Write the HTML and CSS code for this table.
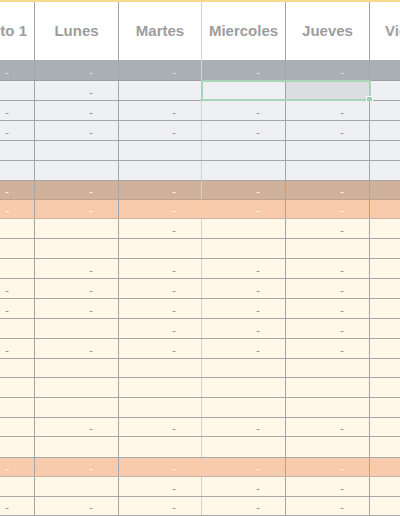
FILE: index.html
```html
<!DOCTYPE html>
<html lang="es">
<head>
<meta charset="utf-8">
<title>Hoja</title>
<link rel="stylesheet" href="styles.css">
</head>
<body>
<div class="sheet">
  <div class="row head">
    <div class="cell first"><span>Gasto 1</span></div>
    <div class="cell">Lunes</div>
    <div class="cell soft">Martes</div>
    <div class="cell">Miercoles</div>
    <div class="cell">Jueves</div>
    <div class="cell last">Viernes</div>
  </div>

  <div class="row g h21"><div class="cell">-</div><div class="cell">-</div><div class="cell soft">-</div><div class="cell">-</div><div class="cell">-</div><div class="cell last"></div></div>
  <div class="row l sel-row"><div class="cell"></div><div class="cell">-</div><div class="cell soft"></div><div class="cell"></div><div class="cell picked"></div><div class="cell last"></div>
    <div class="selection"><span class="handle"></span></div>
  </div>
  <div class="row l"><div class="cell">-</div><div class="cell">-</div><div class="cell soft">-</div><div class="cell">-</div><div class="cell">-</div><div class="cell last"></div></div>
  <div class="row l"><div class="cell">-</div><div class="cell">-</div><div class="cell soft">-</div><div class="cell">-</div><div class="cell">-</div><div class="cell last"></div></div>
  <div class="row l"><div class="cell"></div><div class="cell"></div><div class="cell soft"></div><div class="cell"></div><div class="cell"></div><div class="cell last"></div></div>
  <div class="row l"><div class="cell"></div><div class="cell"></div><div class="cell soft"></div><div class="cell"></div><div class="cell"></div><div class="cell last"></div></div>
  <div class="row b h19"><div class="cell">-</div><div class="cell">-</div><div class="cell soft">-</div><div class="cell">-</div><div class="cell">-</div><div class="cell last"></div></div>
  <div class="row p h19"><div class="cell">-</div><div class="cell">-</div><div class="cell soft">-</div><div class="cell">-</div><div class="cell">-</div><div class="cell last"></div></div>
  <div class="row c"><div class="cell"></div><div class="cell"></div><div class="cell soft">-</div><div class="cell"></div><div class="cell">-</div><div class="cell last"></div></div>
  <div class="row c"><div class="cell"></div><div class="cell"></div><div class="cell soft"></div><div class="cell"></div><div class="cell"></div><div class="cell last"></div></div>
  <div class="row c"><div class="cell"></div><div class="cell">-</div><div class="cell soft">-</div><div class="cell">-</div><div class="cell">-</div><div class="cell last"></div></div>
  <div class="row c"><div class="cell">-</div><div class="cell">-</div><div class="cell soft">-</div><div class="cell">-</div><div class="cell">-</div><div class="cell last"></div></div>
  <div class="row c"><div class="cell">-</div><div class="cell">-</div><div class="cell soft">-</div><div class="cell">-</div><div class="cell">-</div><div class="cell last"></div></div>
  <div class="row c"><div class="cell"></div><div class="cell"></div><div class="cell soft">-</div><div class="cell">-</div><div class="cell">-</div><div class="cell last"></div></div>
  <div class="row c"><div class="cell">-</div><div class="cell">-</div><div class="cell soft">-</div><div class="cell">-</div><div class="cell">-</div><div class="cell last"></div></div>
  <div class="row c h19"><div class="cell"></div><div class="cell"></div><div class="cell soft"></div><div class="cell"></div><div class="cell"></div><div class="cell last"></div></div>
  <div class="row c"><div class="cell"></div><div class="cell"></div><div class="cell soft"></div><div class="cell"></div><div class="cell"></div><div class="cell last"></div></div>
  <div class="row c"><div class="cell"></div><div class="cell"></div><div class="cell soft"></div><div class="cell"></div><div class="cell"></div><div class="cell last"></div></div>
  <div class="row c h19"><div class="cell"></div><div class="cell">-</div><div class="cell soft">-</div><div class="cell">-</div><div class="cell">-</div><div class="cell last"></div></div>
  <div class="row c h21"><div class="cell"></div><div class="cell"></div><div class="cell soft"></div><div class="cell"></div><div class="cell"></div><div class="cell last"></div></div>
  <div class="row p h19"><div class="cell">-</div><div class="cell">-</div><div class="cell soft">-</div><div class="cell">-</div><div class="cell">-</div><div class="cell last"></div></div>
  <div class="row c"><div class="cell"></div><div class="cell"></div><div class="cell soft">-</div><div class="cell">-</div><div class="cell">-</div><div class="cell last"></div></div>
  <div class="row c h19"><div class="cell">-</div><div class="cell">-</div><div class="cell soft">-</div><div class="cell">-</div><div class="cell">-</div><div class="cell last"></div></div>
  <div class="row c"><div class="cell"></div><div class="cell"></div><div class="cell soft"></div><div class="cell"></div><div class="cell"></div><div class="cell last"></div></div>
</div>
</body>
</html>
```

FILE: styles.css
```css
html, body {
  margin: 0;
  padding: 0;
  background: #ffffff;
}

body {
  width: 400px;
  height: 516px;
  overflow: hidden;
  font-family: "Liberation Sans", Arial, sans-serif;
}

.sheet {
  display: flex;
  flex-direction: column;
  width: 400px;
}

.row {
  display: grid;
  grid-template-columns: 35px 84px 83px 84px 84px 1fr;
  height: 20px;
  box-sizing: border-box;
  border-bottom: 1px solid #a7a7a7;
  position: relative;
}

.row.h19 { height: 19px; }
.row.h21 { height: 21px; }

.cell {
  box-sizing: border-box;
  border-right: 1px solid #a4a4a4;
  display: flex;
  align-items: flex-end;
  justify-content: flex-end;
  padding: 0 25px 2px 0;
  font-size: 11px;
  line-height: 12px;
  color: #8a8a8a;
  overflow: hidden;
  white-space: nowrap;
}

.cell.soft { border-right-color: #d2d2d2; }
.cell.last { border-right: none; }

/* header */
.row.head {
  height: 60px;
  border-top: 2px solid #f6da8c;
  border-bottom: none;
  background: #ffffff;
}

.head .cell {
  align-items: center;
  justify-content: center;
  padding: 0 0 1px 0;
  font-size: 15px;
  font-weight: bold;
  line-height: 18px;
  color: #9d9d9f;
}

.head .cell.first {
  justify-content: flex-end;
  padding-right: 7px;
}

.head .cell.last {
  justify-content: flex-start;
  padding-left: 15px;
}

/* row colours */
.row.g { background: #aaaeb5; border-bottom-color: #9c9ea3; }
.row.g .cell { color: #e4e5e8; }

.row.l { background: #eef0f4; }

.row.b { background: #cfb19c; border-bottom-color: #bfa28e; }
.row.b .cell { color: #ffffff; }

.row.p { background: #f8cbad; border-bottom-color: #c9b4a4; }
.row.p .cell { color: #ffffff; }

.row.c { background: #fff8e8; }

.cell.picked { background: #dcdde0; }

/* selection overlay */
.selection {
  position: absolute;
  left: 201px;
  top: -1px;
  width: 170px;
  height: 21px;
  box-sizing: border-box;
  border: 2px solid #a8d4b8;
  pointer-events: none;
}

.handle {
  position: absolute;
  right: -4px;
  bottom: -4px;
  width: 5px;
  height: 5px;
  background: #a3cdb3;
  border: 1px solid #ffffff;
}
```
